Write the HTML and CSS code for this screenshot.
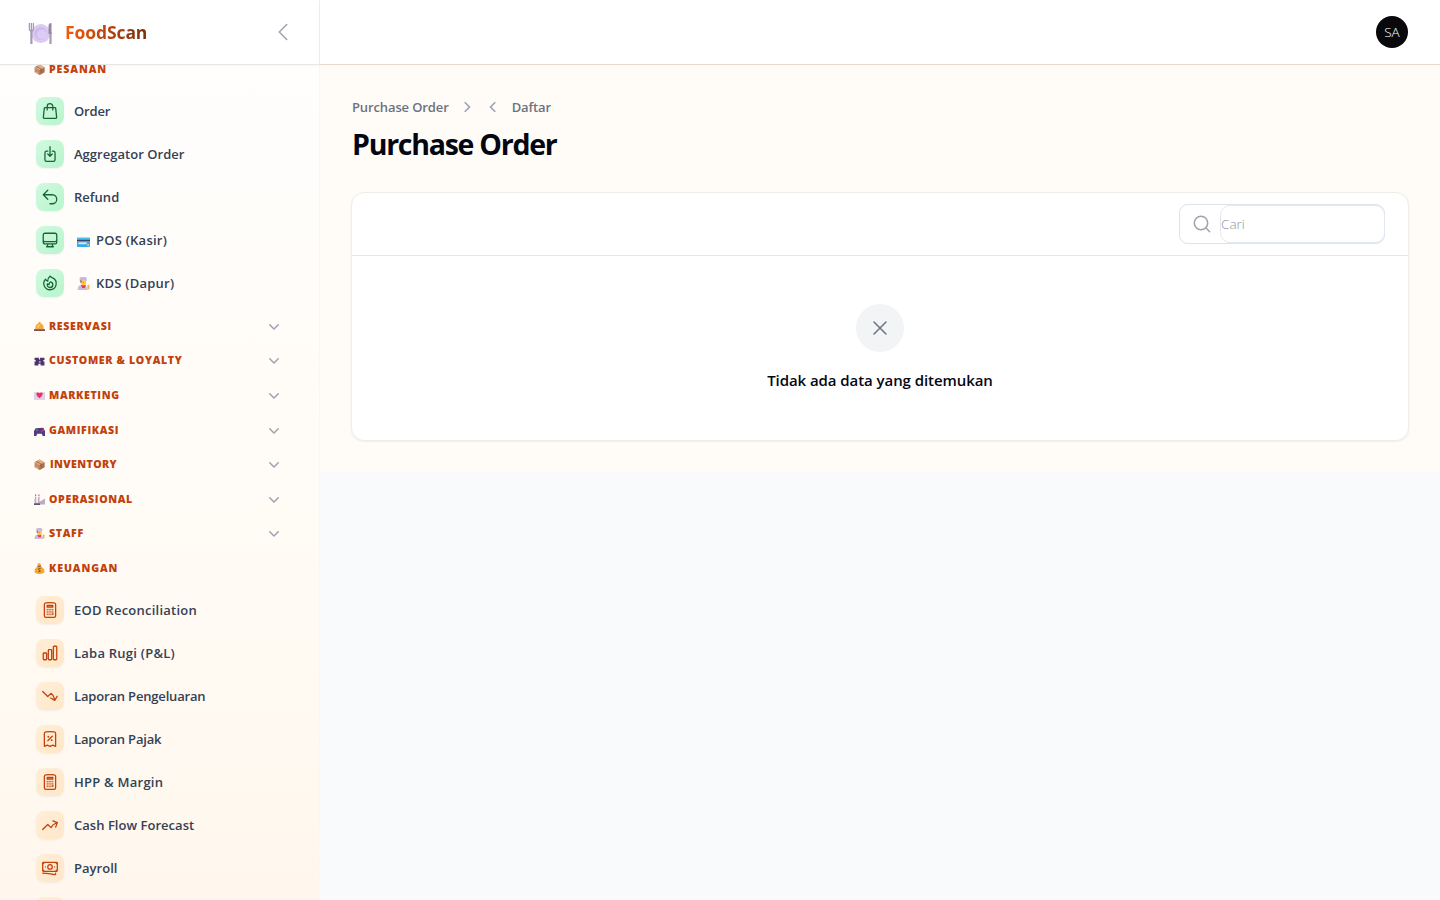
FILE: index.html
```html
<!DOCTYPE html>
<html lang="id">
<head>
<meta charset="utf-8">
<title>Purchase Order - FoodScan</title>
<link rel="stylesheet" href="styles.css">
</head>
<body>
<svg class="defs" width="0" height="0">
  <symbol id="down" viewBox="0 0 20 20"><path fill="currentColor" fill-rule="evenodd" d="M5.22 8.22a.75.75 0 0 1 1.06 0L10 11.94l3.72-3.72a.75.75 0 1 1 1.06 1.06l-4.25 4.25a.75.75 0 0 1-1.06 0L5.22 9.28a.75.75 0 0 1 0-1.06Z"/></symbol>
  <symbol id="calc" viewBox="0 0 24 24"><path d="M15.75 15.75V18m-7.5-6.75h.008v.008H8.25v-.008Zm0 2.25h.008v.008H8.25V13.5Zm0 2.25h.008v.008H8.25v-.008Zm0 2.25h.008v.008H8.25V18Zm2.498-6.75h.007v.008h-.007v-.008Zm0 2.25h.007v.008h-.007V13.5Zm0 2.25h.007v.008h-.007v-.008Zm0 2.25h.007v.008h-.007V18Zm2.504-6.75h.008v.008h-.008v-.008Zm0 2.25h.008v.008h-.008V13.5Zm0 2.25h.008v.008h-.008v-.008Zm0 2.25h.008v.008h-.008V18Zm2.498-6.75h.008v.008h-.008v-.008Zm0 2.25h.008v.008h-.008V13.5ZM8.25 6h7.5v2.25h-7.5V6ZM12 2.25c-1.892 0-3.758.11-5.593.322C5.307 2.7 4.5 3.65 4.5 4.757V19.5a2.25 2.25 0 0 0 2.25 2.25h10.5a2.25 2.25 0 0 0 2.25-2.25V4.757c0-1.108-.806-2.057-1.907-2.185A48.507 48.507 0 0 0 12 2.25Z"/></symbol>
  <symbol id="box" viewBox="0 0 20 20"><path fill="#c58d64" d="M1 6 10 1l9 5v9l-9 5-9-5z"/><path fill="#a8714f" d="m10 10 9-4v9l-9 5z"/><path fill="#e0ae83" d="m1 6 9-5 9 5-9 5z"/><path fill="#8a5f49" d="m5 4 9 5v4l-2 1V9L3 5z"/><path fill="#d8b5d5" d="m3 14 4 2v2l-4-2z"/></symbol>
  <symbol id="chef" viewBox="0 0 20 20"><path fill="#cbbbe0" d="M1 20c0-6 3-8 7-8s8 2 8 8z"/><path fill="#ffc83d" d="M6 5h8v5l-3 3H9l-3-3z"/><path fill="#c8b8da" d="M4 6V2c0-3 11-3 11 0v4l-5-1z"/><path fill="#e83965" d="m6 12 4 1 4-1-2 5H8z"/><path fill="#a65a58" d="M5 5h2v4H5zM9 7h1v2H9z"/><path stroke="#f5b52e" stroke-width="3" d="M17.5 12v7"/></symbol>
</svg>
<div class="app">
<aside class="sidebar">
  <header class="brand">
    <svg class="plate" viewBox="0 0 24 24"><circle cx="12.3" cy="11.5" r="9.5" fill="#dccbf3"/><circle cx="12.3" cy="11.5" r="6.4" fill="#cfb9eb"/><circle cx="13.3" cy="12.5" r="5" fill="#dccbf3"/><path fill="none" stroke="#a79bb4" stroke-width="1.3" d="M.9 1v6q0 2 2 2t2-2V1M2.9 1v8"/><path fill="none" stroke="#a79bb4" stroke-width="2.2" d="M2.9 8v14M22 10v12"/><path fill="#9588a4" d="M20 12V4c0-2 1-3 3-3v11z"/></svg>
    <span class="name">FoodScan</span>
    <svg class="icon collapse" viewBox="0 0 24 24"><path d="M15.75 19.5 8.25 12l7.5-7.5"/></svg>
  </header>
  <nav class="nav">
    <section class="group open first">
      <h3 class="label wide"><svg><use href="#box"/></svg><span>PESANAN</span></h3>
      <ul class="items green">
        <li><i class="tile"><svg class="icon" viewBox="0 0 24 24"><path d="M15.75 10.5V6a3.75 3.75 0 1 0-7.5 0v4.5m11.356-1.993 1.263 12c.07.665-.45 1.243-1.119 1.243H4.25a1.125 1.125 0 0 1-1.12-1.243l1.264-12A1.125 1.125 0 0 1 5.513 7.5h12.974c.576 0 1.059.435 1.119 1.007Z"/></svg></i><span class="tight">Order</span></li>
        <li><i class="tile"><svg class="icon" viewBox="0 0 24 24"><path d="M9 8.25H7.5a2.25 2.25 0 0 0-2.25 2.25v9a2.25 2.25 0 0 0 2.25 2.25h9a2.25 2.25 0 0 0 2.25-2.25v-9a2.25 2.25 0 0 0-2.25-2.25H15M9 12l3 3m0 0 3-3m-3 3V2.25"/></svg></i><span>Aggregator Order</span></li>
        <li><i class="tile"><svg class="icon" viewBox="0 0 24 24"><path d="M9 15 3 9m0 0 6-6M3 9h12a6 6 0 0 1 0 12h-3"/></svg></i><span>Refund</span></li>
        <li><i class="tile"><svg class="icon" viewBox="0 0 24 24"><path d="M9 17.25v1.007a3 3 0 0 1-.879 2.122L7.5 21h9l-.621-.621A3 3 0 0 1 15 18.257V17.25m6-12V15a2.25 2.25 0 0 1-2.25 2.25H5.25A2.25 2.25 0 0 1 3 15V5.25m18 0A2.25 2.25 0 0 0 18.75 3H5.25A2.25 2.25 0 0 0 3 5.25m18 0V12a2.25 2.25 0 0 1-2.25 2.25H5.25A2.25 2.25 0 0 1 3 12V5.25"/></svg></i><svg class="emoji" viewBox="0 0 14 14"><rect y="4" width="14" height="10" rx="1" fill="#38a9e8"/><path fill="#45c3ee" d="M0 4h14v2H0z"/><path fill="#423d67" d="M0 6.3h14v1.2H0z"/><path fill="#dce8f2" d="M1.5 9h9v2h-9z"/><path fill="#f8ca3d" d="M11 11h2v2h-2z"/></svg><span class="loose">POS (Kasir)</span></li>
        <li><i class="tile"><svg class="icon" viewBox="0 0 24 24"><path d="M15.362 5.214A8.252 8.252 0 0 1 12 21 8.25 8.25 0 0 1 6.038 7.047 8.287 8.287 0 0 0 9 9.601a8.983 8.983 0 0 1 3.361-6.867 8.21 8.21 0 0 0 3 2.48Z"/><path d="M12 18a3.75 3.75 0 0 0 .495-7.468 5.99 5.99 0 0 0-1.925 3.547 5.975 5.975 0 0 1-2.133-1.001A3.75 3.75 0 0 0 12 18Z"/></svg></i><svg class="emoji"><use href="#chef"/></svg><span class="loose">KDS (Dapur)</span></li>
      </ul>
    </section>
    <section class="group"><h3 class="label"><svg viewBox="0 0 20 20"><path fill="#f7a93b" d="M2 15c0-7 3-10 6-11V2h4v2c3 1 6 4 6 11z"/><path fill="#ffd071" d="M6 12c0-4 2-6 4-6l-1 6z"/><path fill="#70413b" d="M0 15h20v3H0z"/></svg><span>RESERVASI</span></h3><svg class="down"><use href="#down"/></svg></section>
    <section class="group"><h3 class="label"><svg viewBox="0 0 20 20"><path fill="#4b356f" d="M1 19v-7h2V9H1V5h8v3h2V5h8v4h-2v3h2v7h-7v-3H8v3z"/><path fill="#b9a7d5" d="M9 11h3v3H9z"/></svg><span>CUSTOMER &amp; LOYALTY</span></h3><svg class="down"><use href="#down"/></svg></section>
    <section class="group"><h3 class="label"><svg viewBox="0 0 20 20"><path fill="#ded0e8" d="M0 4h20v14H0z"/><path fill="#ef2f62" d="M4 6q3-3 6 0 3-3 6 0 0 5-6 9-6-4-6-9z"/></svg><span>MARKETING</span></h3><svg class="down"><use href="#down"/></svg></section>
    <section class="group"><h3 class="label"><svg viewBox="0 0 20 20"><path fill="#533b7d" d="m3 6 14-1 3 6v9h-4l-2-4H6l-2 4H0v-9z"/><path fill="#8069b2" d="M4 8h3v3H4z"/><path fill="#ed3c58" d="M15 8h3v3h-3z"/><path fill="#3c80ce" d="M13 11h2v2h-2z"/></svg><span>GAMIFIKASI</span></h3><svg class="down"><use href="#down"/></svg></section>
    <section class="group"><h3 class="label snug"><svg><use href="#box"/></svg><span>INVENTORY</span></h3><svg class="down"><use href="#down"/></svg></section>
    <section class="group"><h3 class="label"><svg viewBox="0 0 20 20"><path fill="#b9aec8" d="M1 19V8h3v8h3V8h3v6l10-6v11z"/><path fill="#e53c83" d="M2 1h2v3H2zM8 1h2v3H8zM2 6h2v2H2zM8 6h2v2H8z"/><path fill="#66546f" d="M0 17h11v3H0z"/></svg><span>OPERASIONAL</span></h3><svg class="down"><use href="#down"/></svg></section>
    <section class="group"><h3 class="label"><svg><use href="#chef"/></svg><span>STAFF</span></h3><svg class="down"><use href="#down"/></svg></section>
    <section class="group open">
      <h3 class="label wide"><svg viewBox="0 0 20 20"><path fill="#f3a737" d="M7 6 6 2l4-2 3 3-1 3q7 4 7 9 0 5-9 5T1 15q0-5 6-9z"/><path fill="none" stroke="#804b31" stroke-width="1.6" d="M6 6h7M12 10q-4-1-4 1t3 3-3 2"/></svg><span>KEUANGAN</span></h3>
      <ul class="items orange">
        <li><i class="tile"><svg class="icon"><use href="#calc"/></svg></i><span class="loose">EOD Reconciliation</span></li>
        <li><i class="tile"><svg class="icon" viewBox="0 0 24 24"><path d="M3 13.125C3 12.504 3.504 12 4.125 12h2.25c.621 0 1.125.504 1.125 1.125v6.75C7.5 20.496 6.996 21 6.375 21h-2.25A1.125 1.125 0 0 1 3 19.875v-6.75ZM9.75 8.625c0-.621.504-1.125 1.125-1.125h2.25c.621 0 1.125.504 1.125 1.125v11.25c0 .621-.504 1.125-1.125 1.125h-2.25a1.125 1.125 0 0 1-1.125-1.125V8.625ZM16.5 4.125c0-.621.504-1.125 1.125-1.125h2.25C20.496 3 21 3.504 21 4.125v15.75c0 .621-.504 1.125-1.125 1.125h-2.25a1.125 1.125 0 0 1-1.125-1.125V4.125Z"/></svg></i><span class="loose">Laba Rugi (P&amp;L)</span></li>
        <li><i class="tile"><svg class="icon" viewBox="0 0 24 24"><path d="M2.25 6 9 12.75l4.286-4.286a11.948 11.948 0 0 1 4.306 6.43l.776 2.898m0 0 3.182-5.511m-3.182 5.51-5.511-3.181"/></svg></i><span class="tight">Laporan Pengeluaran</span></li>
        <li><i class="tile"><svg class="icon" viewBox="0 0 24 24"><path d="m9 14.25 6-6m4.5-3.493V21.75l-3.75-1.5-3.75 1.5-3.75-1.5-3.75 1.5V4.757c0-1.108.806-2.057 1.907-2.185a48.507 48.507 0 0 1 11.186 0c1.1.128 1.907 1.077 1.907 2.185ZM9.75 9h.008v.008H9.75V9Zm.375 0a.375.375 0 1 1-.75 0 .375.375 0 0 1 .75 0Zm4.125 4.5h.008v.008h-.008V13.5Zm.375 0a.375.375 0 1 1-.75 0 .375.375 0 0 1 .75 0Z"/></svg></i><span class="tight">Laporan Pajak</span></li>
        <li><i class="tile"><svg class="icon"><use href="#calc"/></svg></i><span class="loose">HPP &amp; Margin</span></li>
        <li><i class="tile"><svg class="icon" viewBox="0 0 24 24"><path d="M2.25 18 9 11.25l4.306 4.306a11.95 11.95 0 0 1 5.814-5.518l2.74-1.22m0 0-5.94-2.281m5.94 2.28-2.28 5.941"/></svg></i><span>Cash Flow Forecast</span></li>
        <li><i class="tile"><svg class="icon" viewBox="0 0 24 24"><path d="M2.25 18.75a60.07 60.07 0 0 1 15.797 2.101c.727.198 1.453-.342 1.453-1.096V18.75M3.75 4.5v.75A.75.75 0 0 1 3 6h-.75m0 0v-.375c0-.621.504-1.125 1.125-1.125H20.25M2.25 6v9m18-10.5v.75c0 .414.336.75.75.75h.75m-1.5-1.5h.375c.621 0 1.125.504 1.125 1.125v9.75c0 .621-.504 1.125-1.125 1.125h-.375m1.5-1.5H21a.75.75 0 0 0-.75.75v.75m0 0H3.75m0 0h-.375a1.125 1.125 0 0 1-1.125-1.125V15m1.5 1.5v-.75A.75.75 0 0 0 3 15h-.75M15 10.5a3 3 0 1 1-6 0 3 3 0 0 1 6 0Zm3 0h.008v.008H18V10.5Zm-12 0h.008v.008H6V10.5Z"/></svg></i><span>Payroll</span></li>
        <li><i class="tile"></i></li>
      </ul>
    </section>
  </nav>
</aside>
<div class="content">
  <header class="topbar"><div class="avatar">SA</div></header>
  <main class="main">
    <div class="crumbs"><span class="path">Purchase Order</span><svg viewBox="0 0 20 20"><path d="m7.7 5.2 4.8 4.8-4.8 4.8"/></svg><svg class="back" viewBox="0 0 20 20"><path d="M12.3 5.2 7.5 10l4.8 4.8"/></svg><span class="path">Daftar</span></div>
    <h1 class="title">Purchase Order</h1>
    <section class="card">
      <div class="tools"><div class="search"><svg class="icon" viewBox="0 0 20 20"><circle cx="9" cy="9" r="6.7"/><path d="m14 14 3.7 3.7"/></svg><input class="input" type="text" placeholder="Cari"></div></div>
      <div class="empty"><div class="disc"><svg class="icon" viewBox="0 0 24 24"><path d="M6 18 18 6M6 6l12 12"/></svg></div><h4 class="message">Tidak ada data yang ditemukan</h4></div>
    </section>
  </main>
</div>
</div>
</body>
</html>
```
FILE: styles.css
```css
* { box-sizing: border-box; }
body { margin: 0; font-family: "Open Sans", "Noto Sans", sans-serif; background: #f8fafc; color: #030712; }
h1, h3, h4, ul { margin: 0; padding: 0; list-style: none; }
svg { display: block; flex: none; }
.app { display: flex; height: 900px; overflow: hidden; }
.icon { fill: none; stroke: currentColor; stroke-width: 1.5; stroke-linecap: round; stroke-linejoin: round; }

.sidebar { display: flex; flex-direction: column; width: 320px; border-right: 1px solid #fdf6ee; background: linear-gradient(180deg, #fffefe, #fffcf7 50%, #fff7ed); }
.brand { display: flex; flex: none; align-items: center; height: 65px; padding: 0 24px 0 28px; background: #fff; border-bottom: 1px solid #e7e7e8; box-shadow: 0 1px 2px #0000000a; }
.plate { width: 25px; height: 24px; margin-top: 4px; }
.name { margin-left: 12px; font-size: 17.5px; font-weight: 700; letter-spacing: -.1px; background: linear-gradient(90deg, #f55b08, #7c2d12); background-clip: text; color: transparent; }
.collapse { width: 24px; height: 24px; margin-left: auto; color: #9ca3af; }
.nav { flex: 1; min-height: 0; overflow: hidden; padding: 0 35px 0 34px; }
.group { display: flex; align-items: center; justify-content: space-between; height: 34.6px; }
.group.open { display: block; height: auto; }
.first { margin-top: -13.3px; padding-bottom: 4px; }
.label { display: flex; align-items: center; gap: 5px; height: 34.6px; color: #c2410c; font-size: 10.6px; font-weight: 800; letter-spacing: .65px; white-space: nowrap; }
.label.wide { letter-spacing: .9px; }
.label.snug { letter-spacing: .4px; gap: 6px; }
.label svg { width: 11px; height: 11px; margin: 1px -1px 0 0; }
.down { width: 20px; height: 20px; margin: 0; color: #9ca3af; }
.items { padding-top: 3.2px; }
.items li { display: flex; align-items: center; height: 43px; padding-left: 2px; color: #334155; font-size: 13px; font-weight: 600; letter-spacing: .03px; white-space: nowrap; }
.tight { letter-spacing: -.17px; }
.loose { letter-spacing: .24px; }
.tile { display: grid; place-items: center; width: 28px; height: 28px; margin-right: 10px; border-radius: 8px; box-shadow: 0 1px 2px #0000000d; }
.tile .icon { width: 18px; height: 18px; stroke-width: 1.7; }
.green .tile { background: linear-gradient(135deg, #d0fae0, #b9f4cd); color: #166534; }
.orange .tile { background: linear-gradient(135deg, #ffeed8, #ffe7c8); color: #c2410c; }
.emoji { width: 13px; height: 13px; margin: 1px 6px 0 3px; }

.content { flex: 1; min-width: 0; }
.topbar { display: flex; align-items: center; justify-content: flex-end; height: 65px; padding: 0 32px 1px; background: #fff; border-bottom: 1px solid #ead9cd; box-shadow: 0 1px 2px #0000001a; }
.avatar { width: 32px; height: 32px; border-radius: 50%; background: #09090b; color: #fff; font-size: 13.5px; font-weight: 300; line-height: 32px; text-align: center; }
.main { height: 407px; padding: 32px 31px 0 31px; background: #fffcf7; }
.crumbs { display: flex; align-items: center; height: 20px; margin: 0 0 0 1px; color: #6b7280; font-size: 13px; font-weight: 600; }
.path { letter-spacing: -.12px; }
.crumbs svg { width: 20px; height: 20px; margin-left: 8px; fill: none; stroke: #9ca3af; stroke-width: 1.6; }
.crumbs .back { margin: 0 9px 0 6px; }
.title { height: 36px; margin: 9px 0 30px 1px; font-size: 28.5px; line-height: 36px; font-weight: 700; letter-spacing: -1.25px; }
.card { height: 249px; border: 1px solid #f0ede9; border-radius: 13px; background: #fff; box-shadow: 0 1px 2px #0000000d; }
.tools { display: flex; justify-content: flex-end; align-items: center; height: 63px; padding-right: 23px; border-bottom: 1px solid #e5e7eb; }
.search { display: flex; align-items: center; width: 206px; height: 40px; padding-left: 12px; border: 1px solid #dfe2e6; border-radius: 9px; }
.search .icon { width: 20px; height: 20px; color: #9ca3af; }
.input { width: 165px; height: 38px; margin-left: 8px; padding: 0; border: 1px solid #e2e8f0; border-radius: 10px; font: 300 13.5px "Open Sans", sans-serif; background: #fff; }
.input::placeholder { color: #8b93a1; }
.empty { display: flex; flex-direction: column; align-items: center; padding-top: 48px; }
.disc { display: grid; place-items: center; width: 48px; height: 48px; border-radius: 50%; background: #f3f4f6; color: #6b7280; }
.disc .icon { width: 24px; height: 24px; }
.message { margin-top: 16px; font-size: 15px; line-height: 24px; font-weight: 600; letter-spacing: -.07px; white-space: nowrap; }
```
